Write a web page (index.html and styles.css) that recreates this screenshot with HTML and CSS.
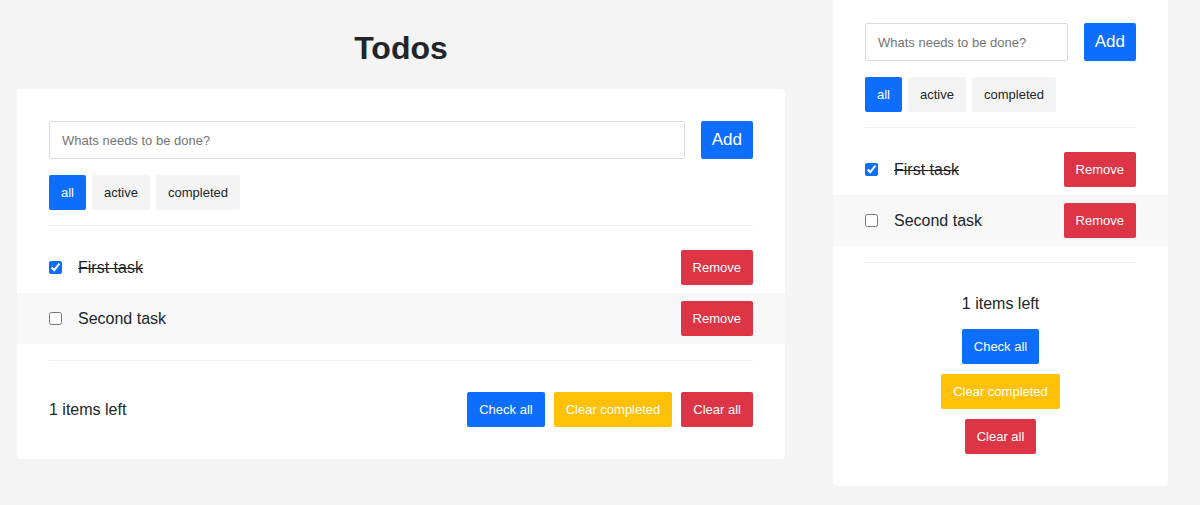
FILE: index.html
```html
<!DOCTYPE html>
<html lang="en">
<head>
<meta charset="utf-8">
<title>Todos</title>
<link rel="stylesheet" href="styles.css">
</head>
<body>
<div class="page">
  <main class="main-col">
    <h1 class="title">Todos</h1>
    <section class="card">
      <div class="section">
        <form class="add-form" onsubmit="return false">
          <input class="add-input" type="text" placeholder="Whats needs to be done?">
          <button class="btn btn-add" type="button">Add</button>
        </form>
        <div class="filters">
          <button class="btn filter active-filter" type="button">all</button>
          <button class="btn filter" type="button">active</button>
          <button class="btn filter" type="button">completed</button>
        </div>
      </div>
      <div class="divider"></div>
      <ul class="list">
        <li class="row">
          <label class="row-label"><input type="checkbox" class="check" checked><span class="task done">First task</span></label>
          <button class="btn btn-red" type="button">Remove</button>
        </li>
        <li class="row row-alt">
          <label class="row-label"><input type="checkbox" class="check"><span class="task">Second task</span></label>
          <button class="btn btn-red" type="button">Remove</button>
        </li>
      </ul>
      <div class="divider"></div>
      <div class="footer">
        <span class="left-count">1 items left</span>
        <div class="footer-actions">
          <button class="btn btn-blue" type="button">Check all</button>
          <button class="btn btn-yellow" type="button">Clear completed</button>
          <button class="btn btn-red" type="button">Clear all</button>
        </div>
      </div>
    </section>
  </main>
  <aside class="card side-card">
    <div class="section">
      <form class="add-form" onsubmit="return false">
        <input class="add-input" type="text" placeholder="Whats needs to be done?">
        <button class="btn btn-add" type="button">Add</button>
      </form>
      <div class="filters">
        <button class="btn filter active-filter" type="button">all</button>
        <button class="btn filter" type="button">active</button>
        <button class="btn filter" type="button">completed</button>
      </div>
    </div>
    <div class="divider"></div>
    <ul class="list">
      <li class="row">
        <label class="row-label"><input type="checkbox" class="check" checked><span class="task done">First task</span></label>
        <button class="btn btn-red" type="button">Remove</button>
      </li>
      <li class="row row-alt">
        <label class="row-label"><input type="checkbox" class="check"><span class="task">Second task</span></label>
        <button class="btn btn-red" type="button">Remove</button>
      </li>
    </ul>
    <div class="divider"></div>
    <div class="footer footer-stack">
      <span class="left-count">1 items left</span>
      <button class="btn btn-blue" type="button">Check all</button>
      <button class="btn btn-yellow" type="button">Clear completed</button>
      <button class="btn btn-red" type="button">Clear all</button>
    </div>
  </aside>
</div>
</body>
</html>
```
FILE: styles.css
```css
* { box-sizing: border-box; }
html, body {
  margin: 0;
  padding: 0;
  background: #f4f4f4;
  font-family: "Liberation Sans", Arial, sans-serif;
  color: #212529;
}
.page {
  display: flex;
  align-items: flex-start;
  gap: 48px;
  padding: 0 32px 0 17px;
}
.main-col {
  width: 768px;
  flex: none;
}
.title {
  margin: 30px 0 22px;
  font-size: 32px;
  line-height: 37px;
  font-weight: 700;
  text-align: center;
  color: #212529;
}
.card {
  background: #fff;
  border-radius: 4px;
  padding: 32px 0;
}
.side-card {
  width: 335px;
  flex: none;
  margin-top: -9px;
}
.section {
  padding: 0 32px;
}
.add-form {
  display: flex;
  gap: 16px;
  margin: 0;
}
.add-input {
  flex: 1;
  min-width: 0;
  height: 38px;
  border: 1px solid #dcdcdc;
  border-radius: 2px;
  padding: 0 12px;
  font-family: inherit;
  font-size: 13px;
  color: #212529;
  background: #fff;
}
.add-input::placeholder { color: #757575; }
.btn {
  border: none;
  border-radius: 2px;
  height: 35px;
  padding: 0 12px;
  font-family: "Liberation Sans", Arial, sans-serif;
  font-size: 13px;
  color: #fff;
  cursor: pointer;
  white-space: nowrap;
}
.btn-add {
  height: 38px;
  font-size: 17px;
  padding: 0 11px;
  background: #0d6efd;
}
.filters {
  display: flex;
  gap: 6px;
  margin-top: 16px;
}
.filter {
  background: #f4f4f4;
  color: #212529;
}
.filter.active-filter {
  background: #0d6efd;
  color: #fff;
}
.divider {
  margin: 15px 32px 0;
  border-top: 1px solid #efefef;
}
.list {
  list-style: none;
  margin: 0;
  padding: 16px 0;
}
.row {
  display: flex;
  align-items: center;
  justify-content: space-between;
  padding: 8px 32px;
}
.row-alt {
  background: #f8f8f8;
}
.row-label {
  display: flex;
  align-items: center;
  gap: 16px;
  font-size: 16px;
}
.check {
  margin: 0;
  width: 13px;
  height: 13px;
  accent-color: #0d6efd;
}
.task.done {
  text-decoration: line-through;
}
.list + .divider {
  margin-top: 0;
}
.footer {
  display: flex;
  align-items: center;
  justify-content: space-between;
  padding: 31px 32px 0;
}
.left-count {
  font-size: 16px;
}
.footer-actions {
  display: flex;
  gap: 9px;
}
.footer-stack {
  flex-direction: column;
  justify-content: flex-start;
  gap: 10px;
  padding-top: 32px;
}
.footer-stack .left-count {
  margin-bottom: 6px;
}
.btn-blue { background: #0d6efd; }
.btn-yellow { background: #ffc107; }
.btn-red { background: #dc3545; }
```
